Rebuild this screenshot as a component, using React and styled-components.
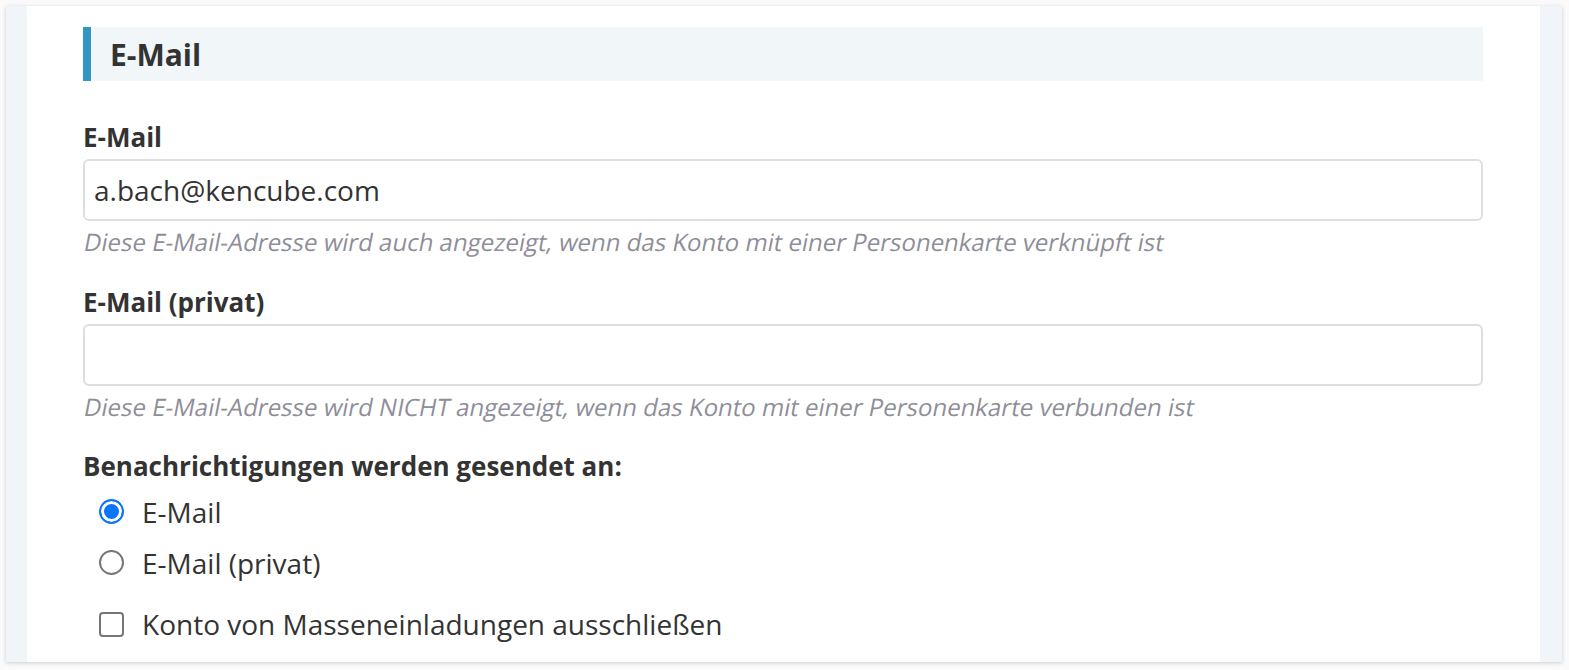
import { useState } from "react";
import styled, { createGlobalStyle } from "styled-components";

const Global = createGlobalStyle`
  html, body {
    margin: 0;
    padding: 0;
    background: #fafafa;
    font-family: "Open Sans", "Noto Sans", sans-serif;
    color: #333;
  }
`;

const Page = styled.div`
  padding: 6px 7px 8px 6px;
`;

const Card = styled.div`
  display: flex;
  height: 656px;
  background: #fff;
  box-shadow: 0 1px 4px rgba(0, 0, 0, 0.18);
  overflow: hidden;
`;

const Strip = styled.div`
  width: ${(p) => p.w}px;
  background: #f1f5f9;
  flex-shrink: 0;
`;

const Content = styled.div`
  flex: 1;
  padding: 21px 57px 0 56px;
`;

const SectionTitle = styled.h2`
  margin: 0;
  height: 54px;
  display: flex;
  align-items: center;
  border-left: 8px solid #3097c2;
  background: #f1f6f9;
  padding-left: 19px;
  font-size: 30px;
  font-weight: 700;
  color: #333;
`;

const Field = styled.div`
  margin-top: ${(p) => p.top}px;
`;

const Label = styled.label`
  display: block;
  font-size: 26px;
  font-weight: 700;
  line-height: 36px;
  color: #333;
`;

const Input = styled.input`
  display: block;
  box-sizing: border-box;
  width: 100%;
  height: 62px;
  margin-top: 4px;
  border: 2px solid #dedede;
  border-radius: 6px;
  padding: 0 9px;
  font-family: "Open Sans", sans-serif;
  font-size: 28px;
  color: #333;
  outline: none;
`;

const Help = styled.div`
  margin-top: 5px;
  font-size: 24px;
  line-height: 32px;
  color: #8e8e99;
`;

/* the original shows a slanted regular face, wider than the true italic */
const Slant = styled.span`
  display: inline-block;
  transform: skewX(-11deg);
  transform-origin: left 75%;
`;

const Options = styled.div`
  display: flex;
  flex-direction: column;
  padding-left: 16px;
  margin-top: 2px;
`;

const Option = styled.label`
  display: flex;
  align-items: center;
  gap: 18px;
  height: ${(p) => p.h}px;
  font-size: 28px;
  color: #333;
  cursor: pointer;
`;

const Radio = styled.span`
  width: 25px;
  height: 25px;
  box-sizing: border-box;
  border-radius: 50%;
  border: 2px solid ${(p) => (p.checked ? "#0a75f5" : "#767676")};
  background: ${(p) => (p.checked ? "#0a75f5" : "#fff")};
  box-shadow: ${(p) => (p.checked ? "inset 0 0 0 3px #fff" : "none")};
  flex-shrink: 0;
`;

const Check = styled.span`
  width: 25px;
  height: 25px;
  box-sizing: border-box;
  border-radius: 4px;
  border: 2px solid #767676;
  background: #fff;
  flex-shrink: 0;
`;

export default function App() {
  const [target, setTarget] = useState("main");
  const [exclude, setExclude] = useState(false);

  return (
    <>
      <Global />
      <Page>
        <Card>
          <Strip w={21} />
          <Content>
            <SectionTitle>E-Mail</SectionTitle>
            <Field top={38}>
              <Label>E-Mail</Label>
              <Input defaultValue="a.bach@kencube.com" />
              <Help><Slant>Diese E-Mail-Adresse wird auch angezeigt, wenn das Konto mit einer Personenkarte verknüpft ist</Slant></Help>
            </Field>
            <Field top={26}>
              <Label>E-Mail (privat)</Label>
              <Input defaultValue="" />
              <Help><Slant>Diese E-Mail-Adresse wird NICHT angezeigt, wenn das Konto mit einer Personenkarte verbunden ist</Slant></Help>
            </Field>
            <Field top={25}>
              <Label>Benachrichtigungen werden gesendet an:</Label>
              <Options>
                <Option h={51} onClick={() => setTarget("main")}>
                  <Radio checked={target === "main"} />
                  E-Mail
                </Option>
                <Option h={51} onClick={() => setTarget("private")}>
                  <Radio checked={target === "private"} />
                  E-Mail (privat)
                </Option>
                <Option h={72} onClick={() => setExclude(!exclude)}>
                  <Check />
                  Konto von Masseneinladungen ausschließen
                </Option>
              </Options>
            </Field>
          </Content>
          <Strip w={22} />
        </Card>
      </Page>
    </>
  );
}
